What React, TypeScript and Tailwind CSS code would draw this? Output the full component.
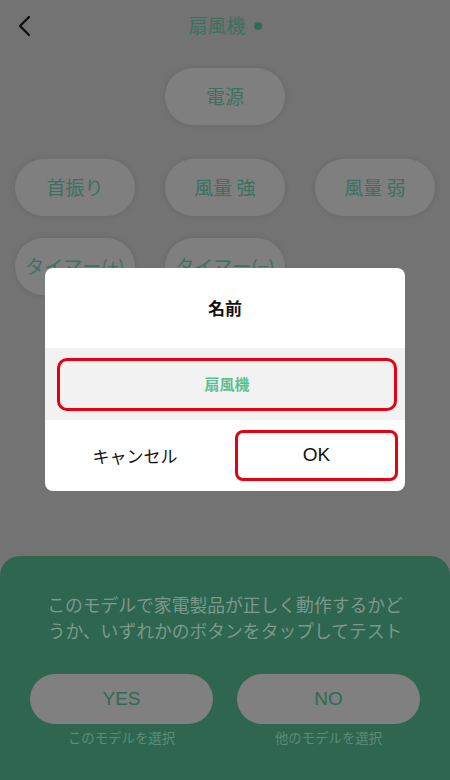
import React from 'react';

const FONT = { fontFamily: '"Noto Sans CJK JP", "Noto Sans", sans-serif' };

const pill =
  'w-[120px] h-[57px] rounded-full bg-[#7f7f7f] shadow-[0_0_6px_rgba(0,0,0,0.1)] flex items-center justify-center text-[19px] text-[#3d7060]';

function Remote() {
  return (
    <div className="flex flex-col items-center">
      {/* header */}
      <div className="relative w-full h-[50px] flex items-center justify-center">
        <svg className="absolute left-[16px] top-[15px]" width="16" height="22" viewBox="0 0 16 22">
          <polyline points="13,2 4,11 13,20" fill="none" stroke="#111" strokeWidth="2.4" strokeLinecap="round" strokeLinejoin="round" />
        </svg>
        <div className="flex items-center gap-[8px] text-[19px] text-[#3d7060]">
          <span>扇風機</span>
          <span className="w-[8px] h-[8px] rounded-full bg-[#2f6e56] mt-[2px]" />
        </div>
      </div>

      <div className="mt-[18px] w-full flex justify-center">
        <div className={pill}>電源</div>
      </div>

      <div className="mt-[34px] w-full px-[15px] flex justify-between">
        <div className={pill}>首振り</div>
        <div className={pill}>風量 強</div>
        <div className={pill}>風量 弱</div>
      </div>

      <div className="mt-[22px] w-full px-[15px] flex gap-[30px]">
        <div className={pill}>タイマー(+)</div>
        <div className={pill}>タイマー(−)</div>
      </div>
    </div>
  );
}

function TestPanel() {
  return (
    <div className="absolute left-0 right-0 bottom-0 h-[224px] rounded-t-[20px] bg-[#2e6650] flex flex-col items-center">
      <p className="mt-[35px] w-[362px] text-center text-[17.8px] leading-[26px] text-[#7b9a8c]">
        このモデルで家電製品が正しく動作するかどうか、いずれかのボタンをタップしてテスト
      </p>
      <div className="mt-[31px] w-full px-[30px] flex justify-between">
        {[
          ['YES', 'このモデルを選択'],
          ['NO', '他のモデルを選択'],
        ].map(([label, sub]) => (
          <div key={label} className="flex flex-col items-center">
            <div className="w-[183px] h-[50px] rounded-full bg-[#808080] flex items-center justify-center text-[19px] text-[#2f6a53]" style={{ fontFamily: '"Liberation Sans", sans-serif' }}>
              {label}
            </div>
            <div className="mt-[3px] text-[13.4px] leading-[20px] text-[#5e8c78]">{sub}</div>
          </div>
        ))}
      </div>
    </div>
  );
}

function NameDialog() {
  return (
    <div className="absolute left-[45px] top-[268px] w-[360px] rounded-[8px] bg-white overflow-hidden">
      <div className="h-[80px] flex items-center justify-center text-[17px] font-bold text-[#111]">名前</div>
      <div className="h-[72px] bg-[#f2f2f2] pl-[12px] pr-[8px] flex items-center">
        <div className="w-full h-[53px] rounded-[10px] border-[3px] border-[#e60012] flex items-center justify-center text-[15px] font-bold text-[#5cbf98]">
          扇風機
        </div>
      </div>
      <div className="h-[71px] flex items-center">
        <div className="w-[180px] flex items-center justify-center text-[17px] text-[#111]">キャンセル</div>
        <div className="w-[180px] flex items-center justify-center pl-[10px] pr-[7px]">
          <div className="w-full h-[51px] rounded-[8px] border-[3px] border-[#e60012] flex items-center justify-center text-[19px] text-[#111]" style={{ fontFamily: '"Liberation Sans", sans-serif' }}>
            OK
          </div>
        </div>
      </div>
    </div>
  );
}

export default function App() {
  return (
    <div className="relative w-[450px] h-[780px] overflow-hidden bg-[#737373]" style={FONT}>
      <Remote />
      <TestPanel />
      <NameDialog />
    </div>
  );
}
